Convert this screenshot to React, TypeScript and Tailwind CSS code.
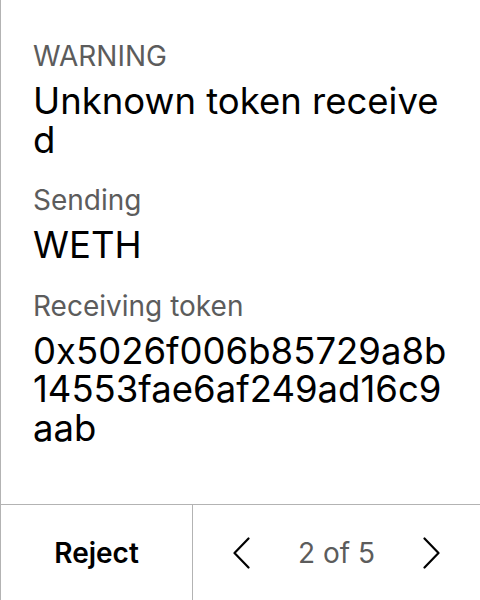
const rows = [
  { label: 'WARNING', value: 'Unknown token received' },
  { label: 'Sending', value: 'WETH' },
  { label: 'Receiving token', value: '0x5026f006b85729a8b14553fae6af249ad16c9aab' },
];

function Chevron({ dir }: { dir: 'left' | 'right' }) {
  return (
    <svg width="17" height="32" viewBox="0 0 17 32" fill="none" stroke="currentColor" strokeWidth="2.2" strokeLinecap="round" strokeLinejoin="round">
      {dir === 'left' ? <polyline points="15.5,1.5 1.5,16 15.5,30.5" /> : <polyline points="1.5,1.5 15.5,16 1.5,30.5" />}
    </svg>
  );
}

export default function App() {
  return (
    <div
      className="w-[480px] h-[600px] flex flex-col bg-white border-l border-[#b3b3b3] text-black"
      style={{ fontFamily: 'Inter, "Noto Sans", sans-serif' }}
    >
      {/* Details */}
      <div className="flex-1 pl-[32px] pr-[32px] pt-[39px] flex flex-col gap-[24px]">
        {rows.map((row) => (
          <div key={row.label} className="flex flex-col gap-[9px]">
            <div className="text-[28px] leading-[34px] text-[#5c5c5c]">{row.label}</div>
            <div className="text-[36.5px] leading-[38.5px] break-all">{row.value}</div>
          </div>
        ))}
      </div>

      {/* Footer */}
      <div className="h-[96px] flex border-t border-[#b3b3b3]">
        <button className="w-[192px] flex items-center justify-center text-[28px] font-semibold border-r border-[#b3b3b3]">
          Reject
        </button>
        <div className="flex-1 flex items-center justify-center gap-[48px]">
          <Chevron dir="left" />
          <span className="text-[28px] text-[#5c5c5c]">2 of 5</span>
          <Chevron dir="right" />
        </div>
      </div>
    </div>
  );
}
